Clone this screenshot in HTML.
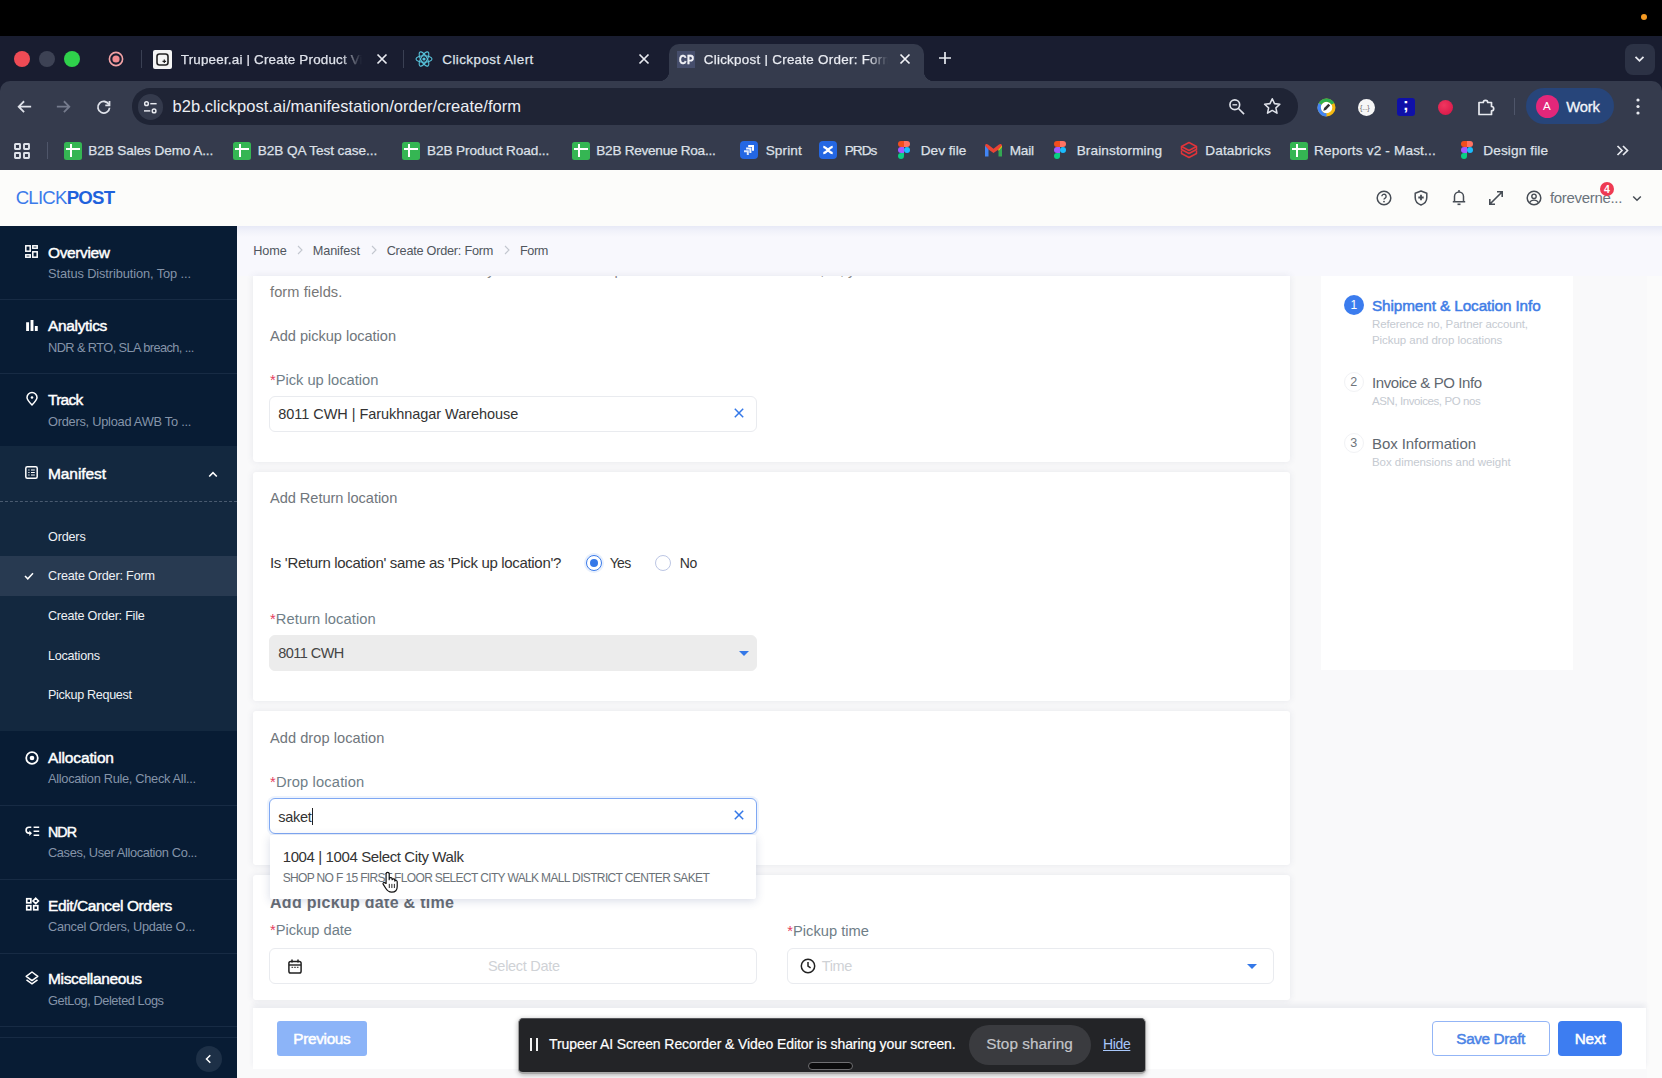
<!DOCTYPE html>
<html lang="en"><head>
<meta charset="utf-8">
<title>Clickpost | Create Order: Form</title>
<style>
*{box-sizing:border-box;margin:0;padding:0}
html,body{width:1662px;height:1078px;overflow:hidden}
body{position:relative;background:#f9f9fa;font-family:"Liberation Sans",sans-serif;color:#333}
.abs{position:absolute}
.t{position:absolute;white-space:nowrap;line-height:1}
svg{position:absolute;overflow:visible}
/* ---------- browser chrome ---------- */
#blk{left:0;top:0;width:1662px;height:36px;background:#000}
#tabs{left:0;top:36px;width:1662px;height:60px;background:#191d30}
#tool{left:0;top:81px;width:1662px;height:89px;background:#353b4d;border-radius:10px 10px 0 0}
#atab{left:669px;top:44px;width:255px;height:37px;background:#353b4d;border-radius:10px 10px 0 0}
#atab:before,#atab:after{content:"";position:absolute;bottom:0;width:10px;height:10px}
#atab:before{left:-10px;background:radial-gradient(circle at 0 0,transparent 10px,#353b4d 10.5px)}
#atab:after{right:-10px;background:radial-gradient(circle at 100% 0,transparent 10px,#353b4d 10.5px)}
.tabt{font-size:13.400px;color:#dfe2ea;top:52px;-webkit-text-stroke:.25px #dfe2ea}
.url{left:132px;top:88px;width:1166px;height:36.500px;border-radius:18.200px;background:#1f2435}
.bm{font-size:13.6px;color:#dde0e8;top:143px;-webkit-text-stroke:.25px #dde0e8}
.sheet{position:absolute;top:141.700px;width:18px;height:18px;border-radius:2.5px;background:#35b653;margin-left:1px}
.sheet:before{content:"";position:absolute;left:5.800px;top:2.300px;width:2.500px;height:13.400px;background:#fff}
.sheet:after{content:"";position:absolute;left:2.200px;top:6.300px;width:13.400px;height:2.100px;background:#fff}
/* ---------- app ---------- */
#hdr{left:0;top:170px;width:1662px;height:56px;background:#fcfcfa}
#hshadow{left:237px;top:226px;width:1425px;height:50px;background:linear-gradient(#e7e9f6 0,#f1f2fa 5px,#f8f8fd 11px,#f8f8fd 100%)}
#side{left:0;top:226px;width:237px;height:852px;background:#081c34}
.st{font-size:15.5px;color:#fff;left:47px;-webkit-text-stroke:.45px #fff}
.ss{font-size:12.8px;color:#8594a9;left:47px}
.sd{position:absolute;left:0;width:237px;height:1px;background:#172b44}
.sub{font-size:12.6px;color:#eef1f5;left:47px}
.card{position:absolute;left:253px;width:1036.500px;background:#fff;border-radius:3px;box-shadow:0 0 7px rgba(60,70,110,.10)}
.h{font-size:14.600px;color:#70767c}
.lb{font-size:14.700px;color:#6f7e87}
.lb b{color:#e5405e;font-weight:normal}
.inp{position:absolute;height:36px;border:1px solid #e9ebef;border-radius:6px;background:#fff}
.v{font-size:14.5px;color:#333}
.bc{font-size:12.7px;color:#50565e}
.bcs{font-size:11px;color:#b8bcc4;transform:scaleX(.7)}
.sp{font-size:11.5px;color:#c5cad1}
</style>
</head>
<body>
<!-- ===== browser chrome ===== -->
<div id="blk" class="abs"></div>
<div class="abs" style="left:1641px;top:14px;width:6px;height:6px;border-radius:50%;background:#f59a23"></div>
<div id="tabs" class="abs"></div>
<div id="tool" class="abs"></div>
<div id="atab" class="abs"></div>
<!-- traffic lights -->
<div class="abs" style="left:14px;top:51px;width:16px;height:16px;border-radius:50%;background:#ee4b55"></div>
<div class="abs" style="left:39px;top:51px;width:16px;height:16px;border-radius:50%;background:#3d4254"></div>
<div class="abs" style="left:64px;top:51px;width:16px;height:16px;border-radius:50%;background:#2fd14b"></div>
<!-- record icon -->
<svg style="left:108px;top:51px" width="16" height="16" viewBox="0 0 16 16"><circle cx="8" cy="8" r="6.6" fill="none" stroke="#f4a3a6" stroke-width="1.6"></circle><circle cx="8" cy="8" r="3.6" fill="#f28b90"></circle></svg>
<div class="abs" style="left:141px;top:50px;width:1px;height:18px;background:#3a4053"></div>
<!-- tab 1 -->
<div class="abs" style="left:153px;top:50px;width:19px;height:19px;border-radius:2px;background:#f4f4f4"></div>
<svg style="left:156px;top:53px" width="13" height="13" viewBox="0 0 13 13"><rect x="1" y="1" width="11" height="11" rx="2.5" fill="none" stroke="#222" stroke-width="1.6"></rect><path d="M8.3 6.5v3.6M6.5 8.3h3.6" stroke="#222" stroke-width="1.2"></path></svg>
<div class="t tabt" style="left: 180.8px; width: 181px; overflow: hidden; mask-image: linear-gradient(90deg, rgb(0, 0, 0) 160px, transparent 181px); letter-spacing: 0.197px; top: 52.6px;">Trupeer.ai | Create Product Video</div>
<svg style="left:376px;top:53px" width="12" height="12" viewBox="0 0 12 12"><path d="M1.5 1.5l9 9M10.500 1.500l-9 9" stroke="#e8eaf0" stroke-width="1.7"></path></svg>
<div class="abs" style="left:403px;top:50px;width:1px;height:18px;background:#3a4053"></div>
<!-- tab 2 -->
<svg style="left:415px;top:50px" width="18" height="18" viewBox="0 0 18 18"><g fill="none" stroke="#58c4dc" stroke-width="1.1"><ellipse cx="9" cy="9" rx="8" ry="3.2"></ellipse><ellipse cx="9" cy="9" rx="8" ry="3.2" transform="rotate(60 9 9)"></ellipse><ellipse cx="9" cy="9" rx="8" ry="3.2" transform="rotate(120 9 9)"></ellipse></g><circle cx="9" cy="9" r="1.6" fill="#58c4dc"></circle></svg>
<div class="t tabt" style="left: 442.3px; letter-spacing: 0.44px; top: 52.6px;">Clickpost Alert</div>
<svg style="left:638px;top:53px" width="12" height="12" viewBox="0 0 12 12"><path d="M1.500 1.500l9 9M10.500 1.500l-9 9" stroke="#e8eaf0" stroke-width="1.700"></path></svg>
<!-- tab 3 active -->
<div class="abs" style="left:677.200px;top:51px;width:17.800px;height:16.800px;background:#464e6c"></div>
<div class="t" style="left:678.700px;top:53.600px;font-size:12.200px;font-weight:bold;color:#f2f3f7;letter-spacing:.6px;transform:scaleX(.86);transform-origin:0 0;-webkit-text-stroke:.35px #f2f3f7">CP</div>
<div class="t tabt" style="left: 703.7px; width: 184px; overflow: hidden; mask-image: linear-gradient(90deg, rgb(0, 0, 0) 164px, transparent 184px); color: rgb(238, 240, 245); letter-spacing: 0.274px; top: 52.7px;">Clickpost | Create Order: Form</div>
<svg style="left:899px;top:53px" width="12" height="12" viewBox="0 0 12 12"><path d="M1.5 1.500l9 9M10.500 1.500l-9 9" stroke="#f3f4f8" stroke-width="1.700"></path></svg>
<svg style="left:938px;top:51px" width="14" height="14" viewBox="0 0 14 14"><path d="M7 1v12M1 7h12" stroke="#e8eaf0" stroke-width="1.700"></path></svg>
<div class="abs" style="left:1625px;top:44px;width:30px;height:31px;border-radius:8px;background:#2c3245"></div>
<svg style="left:1634px;top:55px" width="11" height="8" viewBox="0 0 11 8"><path d="M1.500 1.800l4 4 4-4" fill="none" stroke="#e8eaf0" stroke-width="1.800"></path></svg>
<!-- toolbar -->
<svg style="left:17px;top:100px" width="15" height="13.300" viewBox="0 0 18 16"><path d="M8.500 1.500L2 8l6.500 6.500M2.300 8H17" fill="none" stroke="#dfe2ea" stroke-width="2.150"></path></svg>
<svg style="left:56px;top:100px" width="15" height="13.300" viewBox="0 0 18 16"><path d="M9.500 1.500L16 8l-6.500 6.500M15.700 8H1" fill="none" stroke="#757b8d" stroke-width="2.150"></path></svg>
<svg style="left:96px;top:99.500px" width="15.500" height="15.500" viewBox="0 0 17 17"><path d="M14.300 5.200A6.400 6.400 0 1 0 14.900 8.500" fill="none" stroke="#dfe2ea" stroke-width="1.950"></path><path d="M14.800 1.200v4.600h-4.600" fill="none" stroke="#dfe2ea" stroke-width="1.950"></path></svg>
<div class="url abs"></div>
<div class="abs" style="left:137.500px;top:93.800px;width:25.800px;height:25.800px;border-radius:50%;background:#343a4c"></div>
<svg style="left:143.200px;top:99.600px" width="14.600" height="14.600" viewBox="0 0 15 15"><g fill="none" stroke="#e8eaf0" stroke-width="1.500"><circle cx="3.600" cy="3.800" r="1.900"></circle><path d="M7.500 3.800h6.500"></path><circle cx="11.400" cy="11.200" r="1.900"></circle><path d="M1 11.200h6.500"></path></g></svg>
<div class="t" style="left: 172.5px; top: 98px; font-size: 16.5px; color: rgb(236, 238, 243); letter-spacing: 0.039px;">b2b.clickpost.ai/manifestation/order/create/form</div>
<svg style="left:1227.500px;top:98px" width="17.500" height="17.500" viewBox="0 0 18 18"><g fill="none" stroke="#dfe2ea" stroke-width="1.700"><circle cx="7" cy="7" r="5"></circle><path d="M10.800 10.800L16.500 16.500"></path><path d="M4.600 7h4.800" stroke-width="1.400"></path></g></svg>
<svg style="left:1262.500px;top:97.200px" width="18.500" height="18.500" viewBox="0 0 19 19"><path d="M9.500 1.800l2.350 5 5.450.65-4.050 3.700 1.100 5.400-4.850-2.750-4.850 2.750 1.100-5.400L1.700 7.450l5.450-.65z" fill="none" stroke="#dfe2ea" stroke-width="1.600" stroke-linejoin="round"></path></svg>
<!-- extensions -->
<svg style="left:1317px;top:98px" width="19" height="19" viewBox="0 0 19 19"><circle cx="9.500" cy="9.500" r="7.400" fill="#fff" stroke="#f4b912" stroke-width="3.200"></circle><path d="M9.500 16.900A7.400 7.400 0 0 1 3.090 5.800" fill="none" stroke="#4285f4" stroke-width="3.200"></path><path d="M3.090 5.800A7.400 7.400 0 0 1 15.910 5.800" fill="none" stroke="#2eaf4f" stroke-width="3.200"></path><path d="M6.300 12.700l.8-2.600 4.300-4.300 1.800 1.800-4.300 4.300z" fill="#333"></path></svg>
<div class="abs" style="left:1358px;top:99px;width:17px;height:17px;border-radius:50%;background:#f6f6f6"></div>
<div class="t" style="left:1360px;top:104px;font-size:7px;color:#666;letter-spacing:-.2px">{...}</div>
<div class="abs" style="left:1397px;top:98px;width:18px;height:18px;border-radius:3px;background:#0f10a8"></div>
<div class="t" style="left:1403px;top:96px;font-size:17px;font-weight:bold;color:#fff">;</div>
<div class="abs" style="left:1438px;top:100px;width:15px;height:15px;border-radius:50%;background:radial-gradient(circle at 40% 35%,#f0365f,#d41245)"></div>
<svg style="left:1476px;top:97px" width="20" height="20" viewBox="0 0 20 20"><path d="M3 5.500h4.300a2.200 2.200 0 1 1 4.400 0H15.500v4a2.200 2.200 0 1 1 0 4.400V17.500H3z" fill="none" stroke="#e8eaf0" stroke-width="1.700" stroke-linejoin="round"></path></svg>
<div class="abs" style="left:1514px;top:98px;width:1px;height:17px;background:#4f566a"></div>
<div class="abs" style="left:1526px;top:88px;width:88px;height:36px;border-radius:18px;background:#27457a"></div>
<div class="abs" style="left:1536px;top:95px;width:23px;height:23px;border-radius:50%;background:#e2277a"></div>
<div class="t" style="left:1543px;top:101px;font-size:11.5px;color:#fff">A</div>
<div class="t" style="left: 1566.3px; top: 100px; font-size: 14.8px; color: rgb(243, 245, 250); -webkit-text-stroke: 0.3px rgb(243, 245, 250); letter-spacing: -0.189px;">Work</div>
<svg style="left:1636px;top:98px" width="4" height="17" viewBox="0 0 4 17"><circle cx="2" cy="2" r="1.600" fill="#e8eaf0"></circle><circle cx="2" cy="8.500" r="1.600" fill="#e8eaf0"></circle><circle cx="2" cy="15" r="1.600" fill="#e8eaf0"></circle></svg>
<!-- bookmarks -->
<svg style="left:14px;top:142.700px" width="16" height="16" viewBox="0 0 16 16"><g fill="none" stroke="#dfe2ea" stroke-width="1.900"><rect x="1" y="1" width="5" height="5" rx=".5"></rect><rect x="10" y="1" width="5" height="5" rx=".5"></rect><rect x="1" y="10" width="5" height="5" rx=".5"></rect><rect x="10" y="10" width="5" height="5" rx=".5"></rect></g></svg>
<div class="abs" style="left:47px;top:142px;width:1px;height:17px;background:#4f566a"></div>
<div class="sheet" style="left:63px"></div><div class="t bm" style="left: 88.3px; letter-spacing: -0.108px; top: 144px;">B2B Sales Demo A...</div>
<div class="sheet" style="left:232px"></div><div class="t bm" style="left: 257.7px; letter-spacing: -0.059px; top: 144px;">B2B QA Test case...</div>
<div class="sheet" style="left:401px"></div><div class="t bm" style="left: 427px; letter-spacing: -0.091px; top: 144px;">B2B Product Road...</div>
<div class="sheet" style="left:571px"></div><div class="t bm" style="left: 596.3px; letter-spacing: -0.267px; top: 144px;">B2B Revenue Roa...</div>
<div class="abs" style="left:740px;top:141px;width:18px;height:18px;border-radius:4px;background:#2467e3"></div>
<svg style="left:743px;top:144px" width="12" height="12" viewBox="0 0 12 12"><path d="M5.200 1h5.800v5.800h-2V3H5.200z" fill="#fff"></path><path d="M3.100 3.600h5.300v5.300h-2v-3.300H3.100z" fill="#fff" opacity=".92"></path><path d="M1 6.200h4.800V11h-2V8.200H1z" fill="#fff" opacity=".85"></path></svg>
<div class="t bm" style="left: 765.7px; letter-spacing: 0.097px; top: 144px;">Sprint</div>
<div class="abs" style="left:819px;top:141px;width:18px;height:18px;border-radius:4px;background:#2467e3"></div>
<svg style="left:822px;top:144px" width="12" height="12" viewBox="0 0 12 12"><path d="M1.300 2.800C5 2.800 7 9.200 10.700 9.200M1.300 9.200C5 9.200 7 2.800 10.700 2.800" fill="none" stroke="#fff" stroke-width="2.300"></path></svg>
<div class="t bm" style="left: 844.7px; letter-spacing: -0.967px; top: 144px;">PRDs</div>
<svg class="fig" style="left:898px;top:141px" width="12" height="18" viewBox="0 0 12 18"><path d="M3 0h3v6H3a3 3 0 0 1 0-6z" fill="#f24e1e"></path><path d="M6 0h3a3 3 0 0 1 0 6H6z" fill="#ff7262"></path><path d="M3 6h3v6H3a3 3 0 0 1 0-6z" fill="#a259ff"></path><circle cx="9" cy="9" r="3" fill="#1abcfe"></circle><path d="M3 12h3v3a3 3 0 1 1-3-3z" fill="#0acf83"></path></svg>
<div class="t bm" style="left: 920.7px; letter-spacing: 0.039px; top: 144px;">Dev file</div>
<svg style="left:985px;top:144px" width="17" height="13" viewBox="0 0 17 13"><path d="M0 1.500v11h3.500V5z" fill="#4285f4"></path><path d="M17 1.500v11h-3.500V5z" fill="#34a853"></path><path d="M0 1.500C0 0 1.800-.5 3 .5l5.500 4.300L14 .5c1.200-1 3-.5 3 1L13.500 5.500 8.500 9 3.500 5.500z" fill="#ea4335"></path><path d="M13.500 5.500L17 1.500V3l-3.500 4z" fill="#fbbc04"></path></svg>
<div class="t bm" style="left: 1009.7px; letter-spacing: -0.212px; top: 144px;">Mail</div>
<svg style="left:1054px;top:141px" width="12" height="18" viewBox="0 0 12 18"><path d="M3 0h3v6H3a3 3 0 0 1 0-6z" fill="#f24e1e"></path><path d="M6 0h3a3 3 0 0 1 0 6H6z" fill="#ff7262"></path><path d="M3 6h3v6H3a3 3 0 0 1 0-6z" fill="#a259ff"></path><circle cx="9" cy="9" r="3" fill="#1abcfe"></circle><path d="M3 12h3v3a3 3 0 1 1-3-3z" fill="#0acf83"></path></svg>
<div class="t bm" style="left: 1076.7px; letter-spacing: 0.12px; top: 144px;">Brainstorming</div>
<svg style="left:1180px;top:141px" width="18" height="18" viewBox="0 0 18 18"><g fill="none" stroke="#e0343a" stroke-width="1.500" stroke-linejoin="round"><path d="M1.500 5.500l7.500-4 7.500 4-7.500 4z"></path><path d="M1.500 5.500v3l7.500 4 7.500-4v-3"></path><path d="M1.500 9.500v3l7.500 4 7.500-4v-3"></path></g></svg>
<div class="t bm" style="left: 1205.3px; letter-spacing: 0.131px; top: 144px;">Databricks</div>
<div class="sheet" style="left:1289px"></div><div class="t bm" style="left: 1314px; letter-spacing: 0.163px; top: 144px;">Reports v2 - Mast...</div>
<svg style="left:1461px;top:141px" width="12" height="18" viewBox="0 0 12 18"><path d="M3 0h3v6H3a3 3 0 0 1 0-6z" fill="#f24e1e"></path><path d="M6 0h3a3 3 0 0 1 0 6H6z" fill="#ff7262"></path><path d="M3 6h3v6H3a3 3 0 0 1 0-6z" fill="#a259ff"></path><circle cx="9" cy="9" r="3" fill="#1abcfe"></circle><path d="M3 12h3v3a3 3 0 1 1-3-3z" fill="#0acf83"></path></svg>
<div class="t bm" style="left: 1483.3px; letter-spacing: 0.123px; top: 144px;">Design file</div>
<svg style="left:1616px;top:145px" width="13" height="11" viewBox="0 0 13 11"><path d="M1.500 1l4.500 4.500L1.500 10M7 1l4.500 4.500L7 10" fill="none" stroke="#e8eaf0" stroke-width="1.700"></path></svg>
<!--CHROME_END-->
<!-- ===== app ===== -->
<div id="hdr" class="abs"></div>
<div id="hshadow" class="abs"></div>
<div class="t" style="left: 15.7px; top: 189px; font-size: 18.6px; color: rgb(42, 107, 224); letter-spacing: -0.761px;"><span style="font-weight:normal;color:#3b7bea">CLICK</span><span style="font-weight:bold;color:#1f62dc">POST</span></div>
<svg style="left:1376px;top:190px" width="16" height="16" viewBox="0 0 16 16"><circle cx="8" cy="8" r="6.800" fill="none" stroke="#474d55" stroke-width="1.500"></circle><path d="M5.900 6.300a2.100 2.100 0 1 1 3.200 1.800c-.7.400-1.100.8-1.100 1.500" fill="none" stroke="#474d55" stroke-width="1.400"></path><circle cx="8" cy="11.600" r=".9" fill="#474d55"></circle></svg>
<svg style="left:1414px;top:190px" width="14" height="16" viewBox="0 0 14 16"><path d="M7 1L1.200 3.200v4.300c0 3.500 2.400 6.300 5.800 7.500 3.400-1.200 5.800-4 5.800-7.500V3.200z" fill="none" stroke="#474d55" stroke-width="1.500" stroke-linejoin="round"></path><path d="M7 4.800v5.400M4.300 7.500h5.400" stroke="#474d55" stroke-width="1.800"></path></svg>
<svg style="left:1452px;top:189px" width="14" height="17" viewBox="0 0 14 17"><path d="M2.500 12.500V7.500a4.500 4.500 0 0 1 9 0v5M.8 12.800h12.400" fill="none" stroke="#474d55" stroke-width="1.500"></path><path d="M5.500 15.300h3" stroke="#474d55" stroke-width="1.600"></path><path d="M7 1v2" stroke="#474d55" stroke-width="1.500"></path></svg>
<svg style="left:1488px;top:190px" width="16" height="16" viewBox="0 0 16 16"><path d="M2 14L14 2M9 1.800h5.200V7M7 14.200H1.800V9" fill="none" stroke="#474d55" stroke-width="1.600"></path></svg>
<svg style="left:1526px;top:190px" width="16" height="16" viewBox="0 0 16 16"><circle cx="8" cy="8" r="6.800" fill="none" stroke="#474d55" stroke-width="1.500"></circle><circle cx="8" cy="6.300" r="2.200" fill="none" stroke="#474d55" stroke-width="1.400"></circle><path d="M3.500 12.800c1-2 2.600-2.700 4.500-2.700s3.500.7 4.500 2.700" fill="none" stroke="#474d55" stroke-width="1.400"></path></svg>
<div class="t" style="left: 1550px; top: 189.7px; font-size: 15px; color: rgb(106, 115, 124); letter-spacing: -0.325px;">foreverne...</div>
<div class="abs" style="left:1600px;top:182px;width:14px;height:14px;border-radius:50%;background:#ee3a52"></div>
<div class="t" style="left:1604px;top:184px;font-size:10.500px;font-weight:bold;color:#fff">4</div>
<svg style="left:1632px;top:195px" width="10" height="7" viewBox="0 0 10 7"><path d="M1.200 1.500l3.800 3.800 3.800-3.800" fill="none" stroke="#474d55" stroke-width="1.500"></path></svg>
<!--HEADER_END-->
<div id="side" class="abs">
<div class="abs" style="left:0;top:220px;width:237px;height:285px;background:#13283f"></div>
<div class="abs" style="left:0;top:330px;width:237px;height:40px;background:#283a51"></div>
<div class="sd" style="top:73px"></div><div class="sd" style="top:147px"></div>
<div class="abs" style="left:0;top:275px;width:237px;height:0;border-top:1px dashed #4a5b70"></div>
<div class="sd" style="top:579px"></div><div class="sd" style="top:653px"></div><div class="sd" style="top:727px"></div><div class="sd" style="top:800px"></div><div class="sd" style="top:811px"></div>
<!-- Overview -->
<svg style="left:25px;top:19px" width="13" height="13" viewBox="0 0 13 13"><g fill="none" stroke="#fff" stroke-width="1.500"><rect x=".8" y=".8" width="4.400" height="5.400"></rect><rect x="7.800" y=".8" width="4.400" height="2.400"></rect><rect x=".8" y="9.800" width="4.400" height="2.400"></rect><rect x="7.800" y="6.800" width="4.400" height="5.400"></rect></g></svg>
<div class="t st" style="top: 18.7px; letter-spacing: -0.373px; left: 48px;">Overview</div><div class="t ss" style="top: 42.2px; letter-spacing: -0.095px; left: 48px;">Status Distribution, Top ...</div>
<!-- Analytics -->
<svg style="left:25.5px;top:94px" width="12" height="11" viewBox="0 0 12 11"><path d="M1.600 2.300v8.700M6 0v11M10.300 6V11" stroke="#fff" stroke-width="2.900"></path></svg>
<div class="t st" style="top: 92px; letter-spacing: -0.341px; left: 48px;">Analytics</div><div class="t ss" style="top: 116px; letter-spacing: -0.587px; left: 48px;">NDR &amp; RTO, SLA breach, ...</div>
<!-- Track -->
<svg style="left:26px;top:166px" width="12" height="14" viewBox="0 0 12 14"><path d="M6 13C3 9.800 1 7.600 1 5.500a5 5 0 0 1 10 0C11 7.600 9 9.800 6 13z" fill="none" stroke="#fff" stroke-width="1.500" stroke-linejoin="round"></path><circle cx="6" cy="5.500" r="1.300" fill="#fff"></circle></svg>
<div class="t st" style="top: 166px; letter-spacing: -0.722px; left: 48px;">Track</div><div class="t ss" style="top: 190px; letter-spacing: -0.252px; left: 48px;">Orders, Upload AWB To ...</div>
<!-- Manifest -->
<svg style="left:25px;top:240px" width="13" height="13" viewBox="0 0 13 13"><rect x=".8" y=".8" width="11.400" height="11.400" rx="1.500" fill="none" stroke="#fff" stroke-width="1.500"></rect><path d="M3.300 4h1.200M6 4h3.800M3.300 6.500h1.200M6 6.500h3.800M3.300 9h1.200M6 9h3.800" stroke="#fff" stroke-width="1.200"></path></svg>
<div class="t st" style="top: 239.7px; letter-spacing: -0.085px; left: 48px;">Manifest</div>
<svg style="left:207.700px;top:244.700px" width="10" height="7" viewBox="0 0 10 7"><path d="M1.200 5.500L5 1.700l3.800 3.800" fill="none" stroke="#fff" stroke-width="1.600"></path></svg>
<div class="t sub" style="top: 305px; letter-spacing: -0.16px; left: 48px;">Orders</div>
<svg style="left:24px;top:346px" width="10" height="8" viewBox="0 0 10 8"><path d="M1 4l2.800 2.800L9 1.200" fill="none" stroke="#fff" stroke-width="1.500"></path></svg>
<div class="t sub" style="top: 344.3px; letter-spacing: -0.169px; left: 48px;">Create Order: Form</div>
<div class="t sub" style="top: 384px; letter-spacing: -0.24px; left: 48px;">Create Order: File</div>
<div class="t sub" style="top: 423.7px; letter-spacing: -0.24px; left: 48px;">Locations</div>
<div class="t sub" style="top: 463.3px; letter-spacing: -0.325px; left: 48px;">Pickup Request</div>
<!-- Allocation -->
<svg style="left:24.700px;top:525px" width="14" height="14" viewBox="0 0 15 15"><circle cx="7.500" cy="7.500" r="6.200" fill="none" stroke="#fff" stroke-width="1.900"></circle><circle cx="7.500" cy="7.500" r="2.500" fill="#fff"></circle></svg>
<div class="t st" style="top: 523.7px; letter-spacing: -0.135px; left: 48px;">Allocation</div><div class="t ss" style="top: 547.3px; letter-spacing: -0.303px; left: 48px;">Allocation Rule, Check All...</div>
<!-- NDR -->
<svg style="left:24.500px;top:600px" width="14.500" height="11" viewBox="0 0 14.500 11"><path d="M8.600 1.300h5.600M8.600 5.300h5.600M8.600 9.300h5.600" stroke="#fff" stroke-width="1.600"></path><path d="M6.300 1.300H4a2.900 2.900 0 0 0 0 5.800h1.200" fill="none" stroke="#fff" stroke-width="1.600"></path><path d="M4.300 4.500l2.700 2.700-2.700 2.700z" fill="#fff"></path></svg>
<div class="t st" style="top: 598.7px; font-size: 14.3px; letter-spacing: -0.992px; left: 48px;">NDR</div><div class="t ss" style="top: 621.3px; letter-spacing: -0.371px; left: 48px;">Cases, User Allocation Co...</div>
<!-- Edit/Cancel -->
<svg style="left:25.500px;top:672px" width="13" height="13" viewBox="0 0 14 14"><g fill="none" stroke="#fff" stroke-width="1.800"><rect x=".8" y=".8" width="4.400" height="4.400"></rect><rect x=".8" y="8.300" width="4.400" height="4.400"></rect><rect x="8.300" y="8.300" width="4.400" height="4.400"></rect><path d="M10.500 .3l2.900 2.900-2.900 2.900-2.900-2.900z"></path></g></svg>
<div class="t st" style="top: 671.7px; letter-spacing: -0.391px; left: 48px;">Edit/Cancel Orders</div><div class="t ss" style="top: 695px; letter-spacing: -0.31px; left: 48px;">Cancel Orders, Update O...</div>
<!-- Misc -->
<svg style="left:25px;top:745px" width="14" height="14" viewBox="0 0 14 14"><path d="M7 1L1.200 5.300 7 9.600l5.800-4.300z" fill="none" stroke="#fff" stroke-width="1.500" stroke-linejoin="round"></path><path d="M1.500 8.800L7 12.900l5.500-4.100" fill="none" stroke="#fff" stroke-width="1.500"></path></svg>
<div class="t st" style="top: 745.3px; letter-spacing: -0.352px; left: 48px;">Miscellaneous</div><div class="t ss" style="top: 769px; letter-spacing: -0.448px; left: 48px;">GetLog, Deleted Logs</div>
<div class="abs" style="left:196px;top:820px;width:26px;height:26px;border-radius:50%;background:#1d3047"></div>
<svg style="left:205px;top:828px" width="7" height="10" viewBox="0 0 7 10"><path d="M5.300 1.200L1.500 5l3.800 3.800" fill="none" stroke="#fff" stroke-width="1.500"></path></svg>
<!--SIDE_END-->
</div>
<!-- breadcrumb -->
<div class="t bc" style="left: 253.3px; top: 245.3px; letter-spacing: -0.148px;">Home</div><svg style="left:297px;top:245px" width="6" height="10" viewBox="0 0 6 10"><path d="M1 1l4 4-4 4" fill="none" stroke="#c3c7cf" stroke-width="1.1"></path></svg>
<div class="t bc" style="left: 312.7px; top: 245.3px; letter-spacing: -0.093px;">Manifest</div><svg style="left:371px;top:245px" width="6" height="10" viewBox="0 0 6 10"><path d="M1 1l4 4-4 4" fill="none" stroke="#c3c7cf" stroke-width="1.1"></path></svg>
<div class="t bc" style="left: 386.7px; top: 245.3px; letter-spacing: -0.24px;">Create Order: Form</div><svg style="left:504px;top:245px" width="6" height="10" viewBox="0 0 6 10"><path d="M1 1l4 4-4 4" fill="none" stroke="#c3c7cf" stroke-width="1.1"></path></svg>
<div class="t bc" style="left: 520px; top: 245.3px; letter-spacing: -0.436px;">Form</div>
<!-- card 1 -->
<div class="card" style="top:276px;height:186px;border-radius:0 0 4px 4px;overflow:hidden">
<div class="t h" style="left:17px;top:-13px;color:#888;letter-spacing:-.13px">Please fill details in form to create your order. You can press tab to move across the fiel, of, yours</div>
</div>
<div class="t h" style="left: 270px; top: 284.7px; color: rgb(119, 119, 119); letter-spacing: 0.084px;">form fields.</div>
<div class="t h" style="left: 270px; top: 329px; letter-spacing: -0.031px;">Add pickup location</div>
<div class="t lb" style="left: 270px; top: 373.3px; letter-spacing: -0.018px;"><b>*</b>Pick up location</div>
<div class="inp" style="left:269px;top:396px;width:488px"></div>
<div class="t v" style="left: 278.3px; top: 407.3px; letter-spacing: -0.049px;">8011 CWH | Farukhnagar Warehouse</div>
<svg style="left:734px;top:408px" width="10" height="10" viewBox="0 0 10 10"><path d="M.8.800l8.400 8.400M9.200.800L.8 9.200" stroke="#3478e8" stroke-width="1.500"></path></svg>
<!-- card 2 -->
<div class="card" style="top:472px;height:229px"></div>
<div class="t h" style="left: 270px; top: 491.3px; letter-spacing: -0.049px;">Add Return location</div>
<div class="t v" style="left: 270px; top: 554.7px; font-size: 15px; letter-spacing: -0.326px;">Is 'Return location' same as 'Pick up location'?</div>
<div class="abs" style="left:586px;top:555px;width:16px;height:16px;border-radius:50%;border:1px solid #3b7bea;background:#fff;box-shadow:0 0 0 2px rgba(59,123,234,.12)"></div>
<div class="abs" style="left:590px;top:559px;width:8px;height:8px;border-radius:50%;background:#3478e8"></div>
<div class="t v" style="left: 609.7px; top: 555.7px; font-size: 14px; letter-spacing: -0.622px;">Yes</div>
<div class="abs" style="left:655px;top:555px;width:16px;height:16px;border-radius:50%;border:1px solid #bcc6e4;background:#fff"></div>
<div class="t v" style="left: 679.7px; top: 555.7px; font-size: 14px; letter-spacing: -0.306px;">No</div>
<div class="t lb" style="left: 270px; top: 612px; letter-spacing: 0.079px;"><b>*</b>Return location</div>
<div class="inp" style="left:269px;top:635px;width:488px;background:#ececec;border-color:#ececec"></div>
<div class="t v" style="left: 278.3px; top: 646.3px; color: rgb(69, 69, 69); letter-spacing: -0.549px;">8011 CWH</div>
<svg style="left:739px;top:651px" width="10" height="5" viewBox="0 0 10 5"><path d="M0 0h10L5 5z" fill="#3478e8"></path></svg>
<!-- card 3 -->
<div class="card" style="top:711px;height:154px"></div>
<div class="t h" style="left: 270px; top: 730.7px; letter-spacing: 0.044px;">Add drop location</div>
<div class="t lb" style="left: 270px; top: 775.3px; letter-spacing: 0.156px;"><b>*</b>Drop location</div>
<!-- card 4 -->
<div class="card" style="top:875px;height:125px"></div>
<div class="t" style="left: 270px; top: 895.3px; font-size: 16px; font-weight: bold; color: rgb(104, 109, 116); letter-spacing: 0.295px;">Add pickup date &amp; time</div>
<div class="t lb" style="left: 270px; top: 923.3px; letter-spacing: -0.044px;"><b>*</b>Pickup date</div>
<div class="t lb" style="left: 787.3px; top: 923.5px; letter-spacing: 0.005px;"><b>*</b>Pickup time</div>
<div class="inp" style="left:269px;top:948px;width:488px"></div>
<svg style="left:288px;top:959px" width="14" height="15" viewBox="0 0 14 15"><rect x=".9" y="2.400" width="12.200" height="11.700" rx="1.800" fill="none" stroke="#222" stroke-width="1.500"></rect><path d="M1 6h12" stroke="#222" stroke-width="1.400"></path><path d="M4 .5v3M10 .5v3" stroke="#222" stroke-width="1.500"></path><path d="M3.500 8.300h7" stroke="#222" stroke-width="1" stroke-dasharray="1.600 1.100"></path></svg>
<div class="t" style="left: 488px; top: 959.3px; font-size: 14.5px; color: rgb(207, 210, 214); letter-spacing: -0.297px;">Select Date</div>
<div class="inp" style="left:787px;top:948px;width:487px"></div>
<svg style="left:800px;top:958px" width="16" height="16" viewBox="0 0 16 16"><circle cx="8" cy="8" r="6.700" fill="none" stroke="#222" stroke-width="1.500"></circle><path d="M8 4v4.200l2.600 1.700" fill="none" stroke="#222" stroke-width="1.500"></path></svg>
<div class="t" style="left: 821.7px; top: 959.3px; font-size: 14.5px; color: rgb(207, 210, 214); letter-spacing: -0.362px;">Time</div>
<svg style="left:1247px;top:964px" width="10" height="5" viewBox="0 0 10 5"><path d="M0 0h10L5 5z" fill="#3478e8"></path></svg>
<!-- drop input + dropdown (above card 4) -->
<div class="inp" style="left:269px;top:798px;width:488px;border-color:#7fa8f3;box-shadow:0 0 0 2px rgba(59,123,234,.09)"></div>
<div class="t v" style="left: 278.3px; top: 809.7px; letter-spacing: -0.318px;">saket</div>
<div class="abs" style="left:312px;top:808px;width:1px;height:17px;background:#222"></div>
<svg style="left:734px;top:810px" width="10" height="10" viewBox="0 0 10 10"><path d="M.800 .800l8.400 8.400M9.200 .800L.800 9.200" stroke="#3478e8" stroke-width="1.500"></path></svg>
<div class="abs" style="left:270px;top:835px;width:486px;height:64px;background:#fff;border-radius:2px;box-shadow:0 2px 10px rgba(40,60,120,.18)"></div>
<div class="t v" style="left: 282.7px; top: 848.7px; font-size: 15px; letter-spacing: -0.388px;">1004 | 1004 Select City Walk</div>
<div class="t" style="left: 282.7px; top: 872.2px; font-size: 12px; color: rgb(107, 114, 120); letter-spacing: -0.643px;">SHOP NO F 15 FIRST FLOOR SELECT CITY WALK MALL DISTRICT CENTER SAKET</div>
<!-- hand cursor -->
<svg style="left:380.800px;top:871.300px" width="16.600" height="22.100" viewBox="0 0 18 24"><path d="M5.500 13.500V3.200a1.700 1.700 0 0 1 3.400 0v6.300l.1-1.300a1.600 1.600 0 0 1 3.100.3v1a1.500 1.500 0 0 1 2.900.5v.9a1.400 1.400 0 0 1 2.600.7v5.200c0 3.700-2.200 6.200-6 6.200-3.200 0-4.800-1.300-6.500-4.200L2.300 14.200c-.6-1.300.9-2.300 1.900-1.300z" fill="#fff" stroke="#111" stroke-width="1.300" stroke-linejoin="round"></path><path d="M9 14v4.500M11.800 14v4.500M14.500 14v4.500" stroke="#111" stroke-width="1"></path></svg>
<div class="abs" style="left:1647px;top:276px;width:15px;height:802px;background:#fbfbfb"></div>
<!-- stepper -->
<div class="abs" style="left:1321px;top:276px;width:252px;height:394px;background:#fff"></div>
<div class="abs" style="left:1343.700px;top:295.200px;width:20px;height:20px;border-radius:50%;background:#3b7cee"></div>
<div class="t" style="left:1350.400px;top:299.400px;font-size:12px;color:#fff">1</div>
<div class="t" style="left: 1372px; top: 298px; font-size: 15.3px; color: rgb(63, 125, 230); -webkit-text-stroke: 0.5px rgb(63, 125, 230); letter-spacing: -0.097px;">Shipment &amp; Location Info</div>
<div class="t sp" style="left: 1372px; top: 319.3px; letter-spacing: -0.132px;">Reference no, Partner account,</div>
<div class="t sp" style="left: 1372px; top: 335.3px; letter-spacing: -0.058px;">Pickup and drop locations</div>
<div class="abs" style="left:1343.700px;top:372px;width:20px;height:20px;border-radius:50%;border:1px solid #f1f2f5"></div>
<div class="t" style="left:1350.200px;top:376px;font-size:12.500px;color:#6f757b">2</div>
<div class="t" style="left: 1372px; top: 375.3px; font-size: 15px; color: rgb(95, 104, 112); letter-spacing: -0.421px;">Invoice &amp; PO Info</div>
<div class="t sp" style="left: 1372px; top: 396px; letter-spacing: -0.413px;">ASN, Invoices, PO nos</div>
<div class="abs" style="left:1343.700px;top:433.300px;width:20px;height:20px;border-radius:50%;border:1px solid #f1f2f5"></div>
<div class="t" style="left:1350.200px;top:437.300px;font-size:12.500px;color:#6f757b">3</div>
<div class="t" style="left: 1372px; top: 436.3px; font-size: 15px; color: rgb(95, 104, 112); letter-spacing: -0.076px;">Box Information</div>
<div class="t sp" style="left: 1372px; top: 457px; letter-spacing: -0.054px;">Box dimensions and weight</div>
<!--MAIN_END-->
<div class="abs" style="left:253px;top:1008px;width:1393px;height:61px;background:#fff;box-shadow:0 -4px 5px rgba(60,70,110,.07)"></div>
<div class="abs" style="left:277px;top:1021px;width:90px;height:35px;border-radius:3px;background:#8cb4f8"></div>
<div class="t" style="left: 293.3px; top: 1031px; font-size: 15.3px; color: rgb(255, 255, 255); -webkit-text-stroke: 0.5px rgb(255, 255, 255); letter-spacing: -0.302px;">Previous</div>
<div class="abs" style="left:1432px;top:1020.500px;width:118px;height:35.500px;border-radius:4px;border:1px solid #93b5f6;background:#fff"></div>
<div class="t" style="left: 1456.3px; top: 1031px; font-size: 15.3px; color: rgb(74, 131, 230); -webkit-text-stroke: 0.5px rgb(74, 131, 230); letter-spacing: -0.363px;">Save Draft</div>
<div class="abs" style="left:1558px;top:1020.500px;width:64px;height:35.500px;border-radius:4px;background:#3d7df1"></div>
<div class="t" style="left: 1574.7px; top: 1031px; font-size: 15.3px; color: rgb(255, 255, 255); -webkit-text-stroke: 0.5px rgb(255, 255, 255); letter-spacing: -0.151px;">Next</div>
<!-- share bar -->
<div class="abs" style="left:518px;top:1018px;width:628px;height:56px;border-radius:5px;background:#232427;border:1px solid #9a9a9a;border-bottom:2px solid #a8a8a8;border-top-color:#55565a;box-shadow:0 1px 5px rgba(0,0,0,.3)"></div>
<div class="abs" style="left:530px;top:1038px;width:2px;height:13px;background:#f2f2f2"></div>
<div class="abs" style="left:536px;top:1038px;width:2px;height:13px;background:#f2f2f2"></div>
<div class="t" style="left: 549px; top: 1037px; font-size: 14px; color: rgb(255, 255, 255); -webkit-text-stroke: 0.2px rgb(255, 255, 255); letter-spacing: -0.09px;">Trupeer AI Screen Recorder &amp; Video Editor is sharing your screen.</div>
<div class="abs" style="left:969px;top:1025px;width:122px;height:40px;border-radius:20px;background:#3a3b3f"></div>
<div class="t" style="left: 986.3px; top: 1036px; font-size: 15.3px; color: rgb(196, 198, 202); -webkit-text-stroke: 0.2px rgb(196, 198, 202); letter-spacing: 0.046px;">Stop sharing</div>
<div class="t" style="left: 1103px; top: 1037px; font-size: 14px; color: rgb(168, 199, 250); text-decoration: underline; letter-spacing: -0.366px;">Hide</div>
<div class="abs" style="left:808px;top:1062px;width:45px;height:8px;border-radius:4px;background:#0b0b0c;border:1px solid #6f6f72"></div>
<!--FOOT_END-->


</body></html>
